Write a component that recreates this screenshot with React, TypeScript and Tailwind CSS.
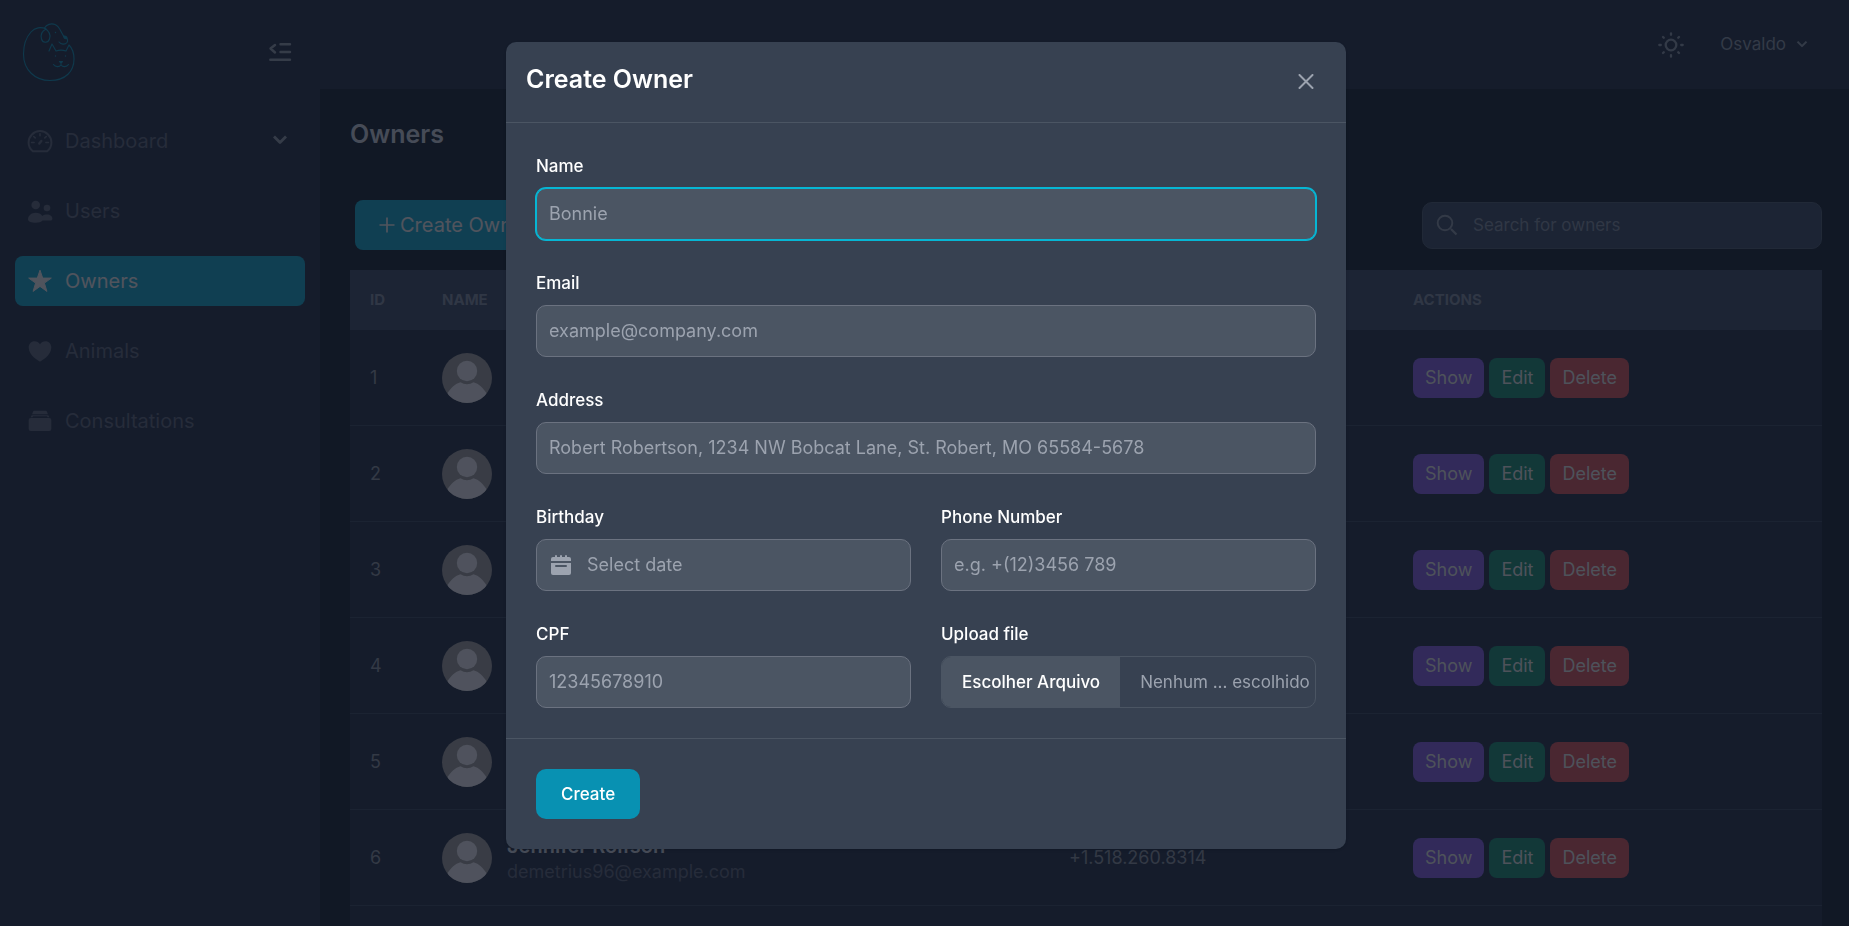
import React from "react";

type IconProps = { className?: string };

const owners = [
  { id: 1, name: "Alice Morgan", email: "alice@example.com", phone: "+1.202.555.0143" },
  { id: 2, name: "Brandon Lee", email: "brandon@example.com", phone: "+1.202.555.0171" },
  { id: 3, name: "Carla Dias", email: "carla@example.com", phone: "+1.202.555.0118" },
  { id: 4, name: "Daniel Cruz", email: "daniel@example.com", phone: "+1.202.555.0196" },
  { id: 5, name: "Elena Rossi", email: "elena@example.com", phone: "+1.202.555.0125" },
  { id: 6, name: "Jennifer Rolfson", email: "demetrius96@example.com", phone: "+1.518.260.8314" },
];

function Logo() {
  return (
    <svg viewBox="0 0 54 60" className="h-[60px] w-[54px] text-[#0a86a8]" fill="none" stroke="currentColor" strokeWidth="1.100" strokeLinecap="round" strokeLinejoin="round" aria-label="Pet clinic">
      <path d="M24 7C19 4.500 13 5.500 9 10C4 15.500 1.500 23 1.500 32C1.500 48 13 58.500 28 58.500C44 58.500 52 49 52 37C52 31 50 26 47 23L44 29C41 28 37 28 34 29L30 22L27 29" />
      <path d="M24 7C20 9 18.500 13 19.500 17C20.500 21 26 21.500 27.500 17C29 13 27 9 22.500 6C24.500 2.500 29 1 33 2.500C39 5 38.500 12 43 15.500C46 16 46 19 45 20.500C43 23 39 22.500 37 20" />
      <path d="M41.500 14.500C43 13.500 45.500 14.500 45 16.500C43.500 17 42 16 41.500 14.500Z" fill="currentColor" />
      <circle cx="33.500" cy="10.500" r=".7" fill="currentColor" stroke="none" />
      <circle cx="33.500" cy="34" r=".7" fill="currentColor" stroke="none" />
      <circle cx="43.500" cy="34" r=".7" fill="currentColor" stroke="none" />
      <path d="M37.500 39.500H40.500L39 41ZM39 41V43C37 45.500 33.500 45 31.500 42.500M39 43C41 45.500 44.500 45 46.500 42.500" />
    </svg>
  );
}

function CollapseIcon() {
  return (
    <svg viewBox="0 0 24 20" className="h-5 w-6" fill="none" stroke="currentColor" strokeWidth="2.400" strokeLinecap="round" strokeLinejoin="round">
      <path d="M7 3L2.500 6.500L7 10.500M12.500 2.300H22M12.500 10H22M2.300 17.700H22" />
    </svg>
  );
}

function DashboardIcon({ className }: IconProps) {
  return (
    <svg viewBox="0 0 26 26" className={className} fill="none" stroke="currentColor" strokeWidth="2" strokeLinecap="round" strokeLinejoin="round">
      <path d="M5.800 23.200C3 21 1.600 18 1.600 14.500a11.400 11.400 0 0 1 22.800 0c0 3.500-1.400 6.500-4.200 8.700z" />
      <path d="M13 5.800v2M6.700 8.500l1.500 1.400M4.600 14.500h2.500M21.400 14.500h-2.500M19.300 8.500l-1.500 1.400" strokeWidth="1.600" />
      <path d="M12.300 15.500l2-2.500" strokeWidth="2.400" />
    </svg>
  );
}

function UsersIcon({ className }: IconProps) {
  return (
    <svg viewBox="0 0 26 26" className={className} fill="currentColor">
      <circle cx="8.700" cy="7" r="4.300" />
      <circle cx="20" cy="10" r="3.300" />
      <path d="M1 21.500c0-4 3.400-6.800 7.700-6.800 3 0 5.300 1.200 6.600 3.200 1.300-.9 3-1.400 4.900-1.400 3 0 5.200 1.700 5.200 4.200 0 1.300-1 1.900-2.500 1.900h-7.300c-1.300 1.400-4 2.200-6.900 2.200C4.700 24.800 1 23.500 1 21.500z" />
    </svg>
  );
}

function StarIcon({ className }: IconProps) {
  return (
    <svg viewBox="0 0 26 26" className={className} fill="currentColor" stroke="currentColor" strokeWidth="1" strokeLinejoin="round">
      <path d="M13 2.200l2.700 7.900h8.600l-6.900 5 2.500 8.300-6.900-5-6.900 5 2.500-8.300-6.900-5h8.600z" />
    </svg>
  );
}

function HeartIcon({ className }: IconProps) {
  return (
    <svg viewBox="0 0 26 26" className={className} fill="currentColor">
      <path d="M13 23.400C12 23.400 1.700 17.500 1.700 9.500 1.700 6 4.200 3.300 7.500 3.300c2.300 0 4.300 1.200 5.500 3 1.200-1.800 3.200-3 5.500-3 3.300 0 5.800 2.700 5.800 6.200C24.300 17.500 14 23.400 13 23.400z" />
    </svg>
  );
}

function ArchiveIcon({ className }: IconProps) {
  return (
    <svg viewBox="0 0 26 26" className={className} fill="currentColor">
      <path d="M7.500 2.700h11c.8 0 1.300.5 1.600 1.200l.8 2.400H5.100l.8-2.400c.3-.7.800-1.200 1.600-1.200z" />
      <path d="M4.700 7.200l-1 2h1.700l.6-1h14l.6 1h1.700l-1-2z" />
      <rect x="1.700" y="10" width="22.600" height="13" rx="2" />
    </svg>
  );
}

function ChevronIcon({ className }: IconProps) {
  return (
    <svg viewBox="0 0 16 16" className={className} fill="none" stroke="currentColor" strokeWidth="2.800" strokeLinejoin="round">
      <path d="M2 3.500l6 6 6-6" />
    </svg>
  );
}

function SunIcon() {
  return (
    <svg viewBox="0 0 26 26" className="size-[26px]" fill="none" stroke="currentColor" strokeWidth="2.300" strokeLinecap="round">
      <circle cx="13" cy="13" r="5.300" />
      <path d="M13 1.300v1.500M13 23.200v1.500M1.300 13h1.500M23.200 13h1.500M5 5l.8.8M20.200 20.200l.8.800M5 21l.8-.8M20.200 5.800l.8-.8" />
    </svg>
  );
}

function SearchIcon() {
  return (
    <svg viewBox="0 0 22 22" className="size-[22px]" fill="none" stroke="currentColor" strokeWidth="1.900">
      <circle cx="9" cy="9" r="7.300" />
      <path d="M15 15l5.500 5.500" strokeWidth="2.200" />
    </svg>
  );
}

function Avatar() {
  return (
    <svg viewBox="0 0 50 50" className="size-[50px] shrink-0 rounded-full">
      <rect width="50" height="50" fill="#968f8f" />
      <circle cx="25" cy="18" r="10.200" fill="#dfdbdf" />
      <path d="M5.500 50V40C9 35 13 30.500 18.500 29.200C22.500 31.800 27.500 31.800 31.500 29.200C37 30.500 41 35 44.500 40V50Z" fill="#dfdbdf" />
    </svg>
  );
}

function CalendarIcon() {
  return (
    <svg viewBox="0 0 20 20" className="size-5" fill="currentColor">
      <path d="M20 4a2 2 0 0 0-2-2h-2V1a1 1 0 0 0-2 0v1h-3V1a1 1 0 0 0-2 0v1H6V1a1 1 0 0 0-2 0v1H2a2 2 0 0 0-2 2v2h20V4ZM0 18a2 2 0 0 0 2 2h16a2 2 0 0 0 2-2V8H0v10Zm5-8h10a1 1 0 0 1 0 2H5a1 1 0 0 1 0-2Z" />
    </svg>
  );
}

const navItems = [
  { label: "Dashboard", Icon: DashboardIcon, active: false, expandable: true },
  { label: "Users", Icon: UsersIcon, active: false, expandable: false },
  { label: "Owners", Icon: StarIcon, active: true, expandable: false },
  { label: "Animals", Icon: HeartIcon, active: false, expandable: false },
  { label: "Consultations", Icon: ArchiveIcon, active: false, expandable: false },
];

function Sidebar() {
  return (
    <aside className="flex w-80 shrink-0 flex-col bg-[#1f273b]">
      <div className="flex items-center justify-between pt-[22px] pr-7 pl-[22px]">
        <Logo />
        <button type="button" aria-label="Collapse sidebar" className="text-[#8b8f9c]">
          <CollapseIcon />
        </button>
      </div>
      <nav className="flex flex-col gap-5 px-[15px] pt-[34px]">
        {navItems.map(({ label, Icon, active, expandable }) => (
          <a
            key={label}
            href="#"
            className={
              active
                ? "flex h-[50px] items-center rounded-lg bg-[#0e9cbd] px-3 text-xl text-[#e5dfdf]"
                : "flex h-[50px] items-center rounded-lg px-3 text-xl text-[#575a6b]"
            }
          >
            <Icon className="size-[26px]" />
            <span className="ml-3 flex-1">{label}</span>
            {expandable && <ChevronIcon className="mr-[5px] size-4 text-[#8b8f9c]" />}
          </a>
        ))}
      </nav>
    </aside>
  );
}

function OwnersTable() {
  return (
    <table className="w-full table-fixed border-separate border-spacing-0 text-left">
      <thead className="bg-[#374058] text-[15px] text-[#7a8090] uppercase">
        <tr className="h-[60px]">
          <th className="w-[72px] px-5 font-bold">ID</th>
          <th className="w-[627px] px-5 font-bold">Name</th>
          <th className="w-[344px] px-5 font-bold">Phone</th>
          <th className="px-5 font-bold">Actions</th>
        </tr>
      </thead>
      <tbody className="bg-[#1f273b] text-lg text-[#838690]">
        {owners.map((o) => (
          <tr key={o.id} className="h-24 *:border-b *:border-[#333c50]">
            <td className="px-5">{o.id}</td>
            <td className="px-5">
              <div className="flex items-center gap-[15px]">
                <Avatar />
                <div>
                  <div className="text-xl leading-7 font-semibold text-[#c1c4cc]">{o.name}</div>
                  <div className="leading-6 text-[#575a6b]">{o.email}</div>
                </div>
              </div>
            </td>
            <td className="px-5">{o.phone}</td>
            <td className="px-5">
              <div className="flex gap-[5px] text-[#dcdad8]">
                <button type="button" className="h-10 rounded-lg bg-[#7f54d8] px-3">Show</button>
                <button type="button" className="h-10 rounded-lg bg-[#148366] px-3">Edit</button>
                <button type="button" className="h-10 rounded-lg bg-[#cf4a4f] px-3">Delete</button>
              </div>
            </td>
          </tr>
        ))}
        <tr className="h-24">
          <td colSpan={4} />
        </tr>
      </tbody>
    </table>
  );
}

type FieldProps = { id: string; label: string; placeholder: string; icon?: React.ReactNode; focused?: boolean };

function Field({ id, label, placeholder, icon, focused }: FieldProps) {
  return (
    <div>
      <label htmlFor={id} className="mb-2 block text-[17px] leading-[27px] font-medium text-white">
        {label}
      </label>
      <div className="relative">
        {icon && (
          <span className="pointer-events-none absolute inset-y-0 left-[15px] flex items-center text-[#9ca3af]">{icon}</span>
        )}
        <input
          id={id}
          type="text"
          placeholder={placeholder}
          className={[
            "block h-[52px] w-full rounded-[10px] border bg-[#4b5563] pr-3 pb-0.5 text-lg text-white outline-none placeholder:text-[#9ca3af]",
            icon ? "pl-[50px]" : "pl-3",
            focused ? "border-[#06b6d4] ring-1 ring-[#06b6d4]" : "border-[#6b7280]",
          ].join(" ")}
        />
      </div>
    </div>
  );
}

function CreateOwnerModal() {
  return (
    <div className="fixed inset-0 flex items-start justify-center overflow-hidden bg-[#111825]/70 pt-[42px] pl-[3px]">
      <div role="dialog" aria-modal="true" aria-labelledby="modal-title" className="w-full max-w-[840px] rounded-[10px] bg-[#374151] shadow">
        <div className="flex items-start justify-between border-b border-[#4b5563] p-5">
          <h3 id="modal-title" className="text-[25px] leading-[35px] font-semibold text-white">Create Owner</h3>
          <button type="button" aria-label="Close" className="flex size-10 items-center justify-center text-[#9ca3af]">
            <svg viewBox="0 0 16 16" className="size-4" fill="none" stroke="currentColor" strokeWidth="2" strokeLinecap="round">
              <path d="M1.500 1l13 13M14.500 1l-13 13" />
            </svg>
          </button>
        </div>
        <form onSubmit={(e) => e.preventDefault()}>
          <div className="flex flex-col gap-[30px] p-[30px]">
            <Field id="name" label="Name" placeholder="Bonnie" focused />
            <Field id="email" label="Email" placeholder="example@company.com" />
            <Field id="address" label="Address" placeholder="Robert Robertson, 1234 NW Bobcat Lane, St. Robert, MO 65584-5678" />
            <div className="grid grid-cols-2 gap-[30px]">
              <Field id="birthday" label="Birthday" placeholder="Select date" icon={<CalendarIcon />} />
              <Field id="phone" label="Phone Number" placeholder="e.g. +(12)3456 789" />
              <Field id="cpf" label="CPF" placeholder="12345678910" />
              <div>
                <label htmlFor="file" className="mb-2 block text-[17px] leading-[27px] font-medium text-white">Upload file</label>
                <label htmlFor="file" className="flex h-[52px] cursor-pointer overflow-hidden rounded-[10px] border border-[#4b5563]">
                  <span className="flex items-center bg-[#4b5563] px-5 pt-0.5 text-[17px] font-medium whitespace-nowrap text-white">Escolher Arquivo</span>
                  <span className="flex items-center pt-0.5 pl-5 text-[17px] whitespace-nowrap text-[#9ca3af]">Nenhum ... escolhido</span>
                </label>
                <input id="file" type="file" className="sr-only" />
              </div>
            </div>
          </div>
          <div className="border-t border-[#4b5563] p-[30px]">
            <button type="submit" className="block h-[50px] rounded-[10px] bg-[#0891b2] px-[25px] pt-0.5 text-[17px] font-medium text-white">Create</button>
          </div>
        </form>
      </div>
    </div>
  );
}

export default function App() {
  return (
    <div className="flex h-screen overflow-hidden bg-[#111825] font-['Inter',sans-serif]">
      <Sidebar />
      <div className="flex min-w-0 flex-1 flex-col">
        <header className="flex h-[89px] shrink-0 items-center justify-end bg-[#1f273b] pr-[41px] text-[#838996]">
          <button type="button" aria-label="Toggle theme">
            <SunIcon />
          </button>
          <button type="button" className="ml-9 flex items-center text-[17px]">
            Osvaldo
            <ChevronIcon className="ml-2.5 size-3" />
          </button>
        </header>
        <main className="flex flex-col pr-[27px] pl-[30px]">
          <h1 className="pt-7 text-[25px] leading-[35px] font-semibold text-[#c1c4cc]">Owners</h1>
          <div className="flex items-center justify-between pt-12 pb-5 pl-[5px]">
            <button type="button" className="flex h-[50px] items-center gap-1 rounded-lg bg-[#0e9cbd] px-[23px] text-xl text-[#e5dfdf]">
              <svg viewBox="0 0 18 18" className="size-[18px]" fill="none" stroke="currentColor" strokeWidth="1.700">
                <path d="M9 1.500v15M1.500 9h15" />
              </svg>
              Create Owner
            </button>
            <div className="relative w-[400px]">
              <span className="pointer-events-none absolute inset-y-0 left-[14px] flex items-center text-[#838996]">
                <SearchIcon />
              </span>
              <input type="search" aria-label="Search for owners" placeholder="Search for owners" className="h-[47px] w-full rounded-[10px] border border-[#465062] bg-[#374058] pl-[50px] text-[17px] text-white placeholder:text-[#7a8090]" />
            </div>
          </div>
          <OwnersTable />
        </main>
      </div>
      <CreateOwnerModal />
    </div>
  );
}
